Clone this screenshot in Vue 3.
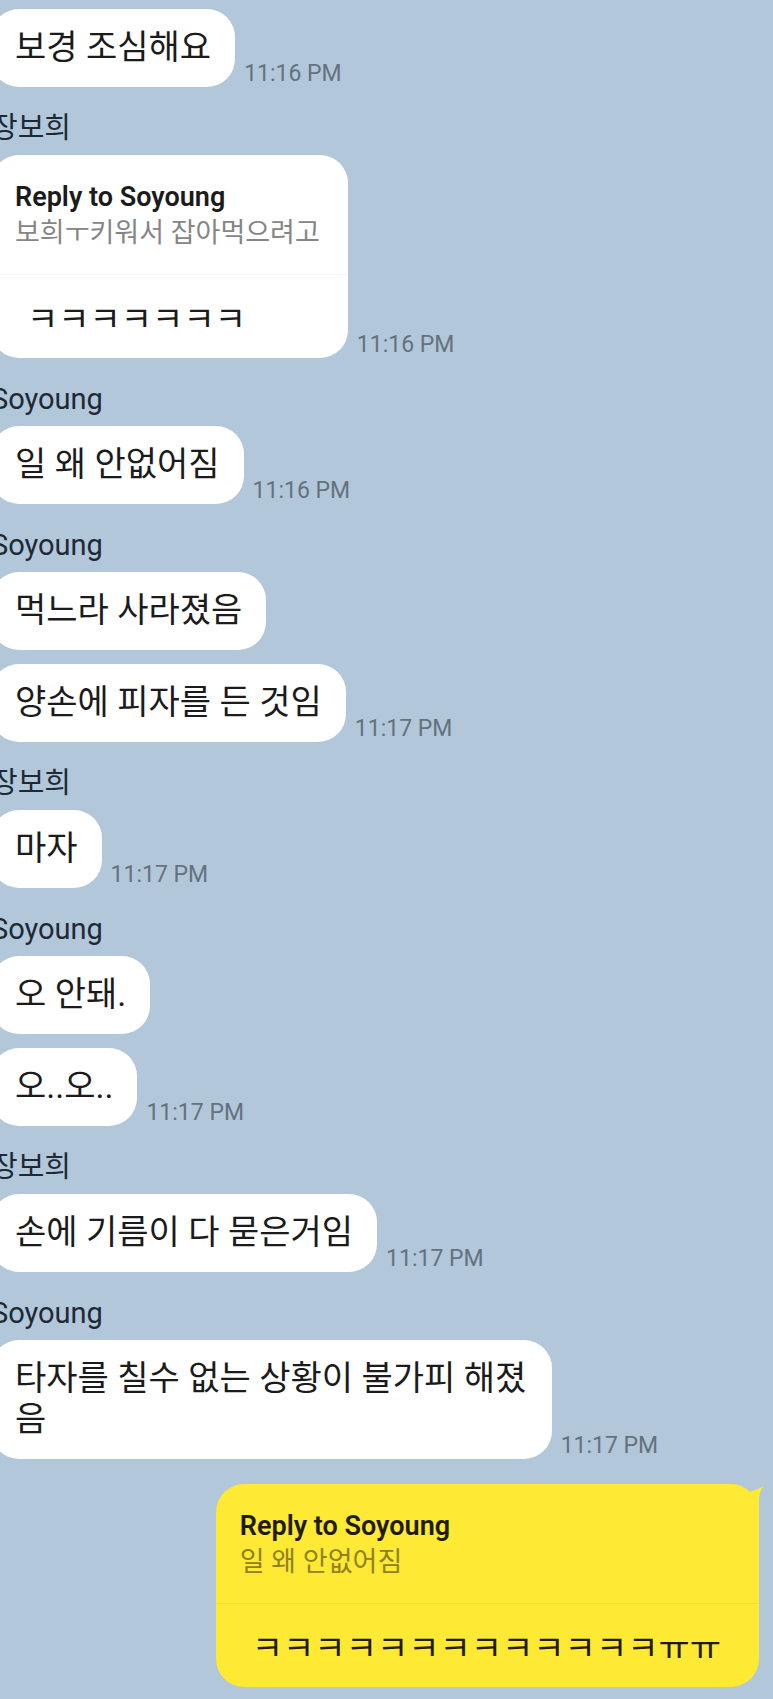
<script setup>
const messages = [
  { text: '보경 조심해요', time: '11:16 PM', tail: true },
  { name: '장보희', reply: { to: 'Soyoung', quote: '보희ㅜ키워서 잡아먹으려고' }, text: 'ㅋㅋㅋㅋㅋㅋㅋ', time: '11:16 PM', tail: true },
  { name: 'Soyoung', text: '일 왜 안없어짐', time: '11:16 PM', tail: true },
  { name: 'Soyoung', text: '먹느라 사라졌음', tail: true },
  { text: '양손에 피자를 든 것임', time: '11:17 PM' },
  { name: '장보희', text: '마자', time: '11:17 PM', tail: true },
  { name: 'Soyoung', text: '오 안돼.', tail: true },
  { text: '오..오..', time: '11:17 PM' },
  { name: '장보희', text: '손에 기름이 다 묻은거임', time: '11:17 PM', tail: true },
  { name: 'Soyoung', text: '타자를 칠수 없는 상황이 불가피 해졌음', time: '11:17 PM', tail: true },
  { mine: true, reply: { to: 'Soyoung', quote: '일 왜 안없어짐' }, text: 'ㅋㅋㅋㅋㅋㅋㅋㅋㅋㅋㅋㅋㅋㅠㅠ', tail: true },
]
</script>

<template>
  <main class="chat">
    <article
      v-for="(m, i) in messages"
      :key="i"
      class="message"
      :class="{ mine: m.mine, named: m.name }"
    >
      <div v-if="m.name" class="name">{{ m.name }}</div>
      <div class="row">
        <div class="bubble">
          <svg v-if="m.tail" class="tail" viewBox="0 0 24 28" aria-hidden="true">
            <path d="M9 8C14 7 19 4 24 2C20 6 19 11 19 18V28H9Z" fill="currentColor" />
          </svg>
          <template v-if="m.reply">
            <div class="quote">
              <strong class="quote-to">Reply to {{ m.reply.to }}</strong>
              <div class="quote-text">{{ m.reply.quote }}</div>
            </div>
            <p class="text reply-text">{{ m.text }}</p>
          </template>
          <p v-else class="text">{{ m.text }}</p>
        </div>
        <time v-if="m.time" class="time">{{ m.time }}</time>
      </div>
    </article>
  </main>
</template>

<style>
body {
  margin: 0;
  background: #b2c7da;
}
</style>

<style scoped>
.chat {
  display: flex;
  flex-direction: column;
  gap: 14px;
  box-sizing: border-box;
  min-height: 100vh;
  padding: 9px 14px 11px 0;
  overflow: hidden;
  background: #b2c7da;
  font-family: Roboto, "Noto Sans CJK KR", sans-serif;
}

/* The conversation is scrolled slightly past the left edge. */
.message {
  margin-left: -9px;
}

.named {
  padding-top: 10px;
}

.mine {
  padding-top: 11px;
}

.name {
  margin-bottom: 10px;
  color: #1d2a36;
  font-size: 29px;
  line-height: 34px;
}

.row {
  display: flex;
  align-items: flex-end;
  gap: 9px;
}

.mine .row {
  justify-content: flex-end;
}

.bubble {
  position: relative;
  max-width: 73%;
  border-radius: 28px;
  background: #fff;
  color: #1b1b1b;
}

.mine .bubble {
  background: #fee934;
  color: #1f1c06;
}

.tail {
  position: absolute;
  top: 0;
  left: -5px;
  width: 24px;
  height: 28px;
  color: #fff;
  transform: scaleX(-1);
}

.mine .tail {
  right: -5px;
  left: auto;
  color: #fee934;
  transform: none;
}

.text {
  margin: 0;
  padding: 18px 24px 19px;
  font-size: 34px;
  line-height: 41px;
  word-break: break-all;
}

.quote {
  padding: 24px 28px 23px 24px;
  border-bottom: 1px solid rgba(0, 0, 0, 0.04);
  font-size: 27px;
  line-height: 36px;
}

.quote-to {
  display: block;
  font-weight: 600;
}

.quote-text {
  color: #858585;
}

.mine .quote-text {
  color: #8f821d;
}

.reply-text {
  padding: 24px 38px 18px 36px;
}

.time {
  flex: none;
  color: #64727f;
  font-size: 23px;
  line-height: 26px;
}
</style>
